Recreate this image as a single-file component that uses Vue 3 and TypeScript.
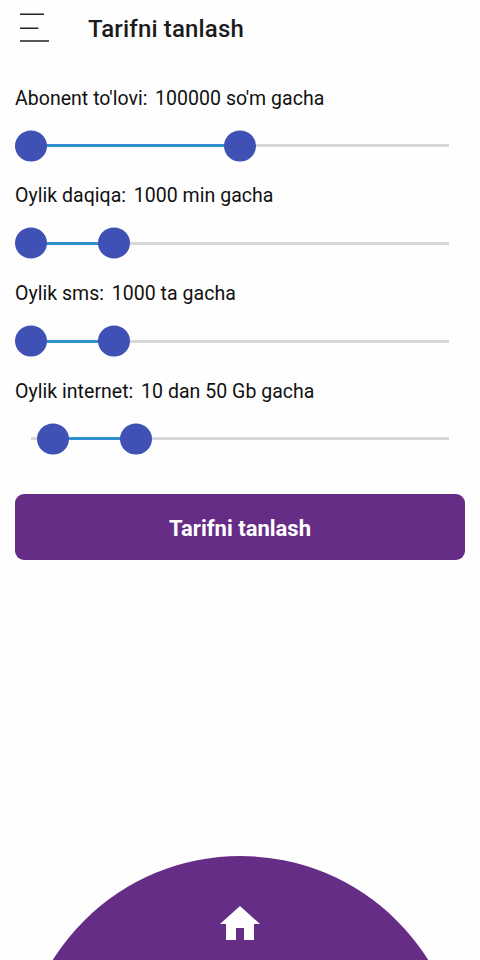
<script setup lang="ts">
interface RangeFilter {
  label: string
  value: string
  from: number
  to: number
}

const filters: RangeFilter[] = [
  { label: "Abonent to'lovi:", value: "100000 so'm gacha", from: 0, to: 50 },
  { label: 'Oylik daqiqa:', value: '1000 min gacha', from: 0, to: 20 },
  { label: 'Oylik sms:', value: '1000 ta gacha', from: 0, to: 20 },
  { label: 'Oylik internet:', value: '10 dan 50 Gb gacha', from: 5.3, to: 25.3 },
]
</script>

<template>
  <div class="screen">
    <header class="header">
      <button class="menu" aria-label="Menu">
        <svg width="30" height="30" viewBox="0 0 30 30" fill="none" stroke="#222" stroke-width="1.5">
          <path d="M1 1.2H25M1 15.3H19.3M1 28H30" />
        </svg>
      </button>
      <h1 class="title">Tarifni tanlash</h1>
    </header>

    <main class="filters">
      <section v-for="f in filters" :key="f.label" class="filter">
        <p class="caption"><span>{{ f.label }}</span><span>{{ f.value }}</span></p>
        <div class="track">
          <div class="fill" :style="{ left: f.from + '%', width: f.to - f.from + '%' }"></div>
          <div class="thumb" :style="{ left: f.from + '%' }"></div>
          <div class="thumb" :style="{ left: f.to + '%' }"></div>
        </div>
      </section>
    </main>

    <button class="submit">Tarifni tanlash</button>

    <nav class="bottom">
      <div class="dome">
        <svg width="48" height="48" viewBox="0 0 24 24" fill="#fff">
          <path d="M10 20v-6h4v6h5v-8h3L12 3 2 12h3v8z" />
        </svg>
      </div>
    </nav>
  </div>
</template>

<style>
body {
  margin: 0;
  background: #fefefe;
}
</style>

<style scoped>
.screen {
  display: flex;
  flex-direction: column;
  box-sizing: border-box;
  width: 480px;
  height: 960px;
  overflow: hidden;
  background: #fefefe;
  font-family: Roboto, sans-serif;
  color: #111;
}
.header {
  display: flex;
  align-items: center;
  height: 56px;
  padding-left: 19px;
}
.menu {
  display: flex;
  padding: 0;
  border: 0;
  background: none;
}
.title {
  margin: 2px 0 0 39px;
  font-size: 24px;
  line-height: 28px;
  font-weight: 500;
  letter-spacing: 0.16px;
  color: #1c1c1c;
}
.filters {
  padding: 29.8px 31px 0 15px;
}
.filter {
  height: 97.7px;
}
.caption {
  display: flex;
  gap: 7.7px;
  margin: 0;
  font-size: 19.5px;
  line-height: 26px;
  letter-spacing: 0.03px;
  white-space: nowrap;
}
.track {
  position: relative;
  height: 3px;
  margin: 32.4px 0 0 15.5px;
  background: #d8d8d8;
}
.fill {
  position: absolute;
  top: 0;
  height: 100%;
  background: #3090d0;
}
.thumb {
  position: absolute;
  top: 50%;
  width: 32px;
  height: 31px;
  border-radius: 50%;
  background: #3f51b5;
  transform: translate(-50%, -50%);
}
.submit {
  flex: none;
  height: 66px;
  margin: 17.2px 15px 0;
  padding: 3px 0 0;
  border: 0;
  border-radius: 9px;
  background: #652d86;
  color: #fff;
  font-family: inherit;
  font-size: 22px;
  font-weight: 700;
}
.bottom {
  display: flex;
  justify-content: center;
  height: 104.5px;
  margin-top: auto;
  overflow: hidden;
}
.dome {
  display: flex;
  flex: none;
  justify-content: center;
  box-sizing: border-box;
  width: 443px;
  height: 443px;
  padding-top: 44.5px;
  border-radius: 50%;
  background: #652d86;
}
</style>
